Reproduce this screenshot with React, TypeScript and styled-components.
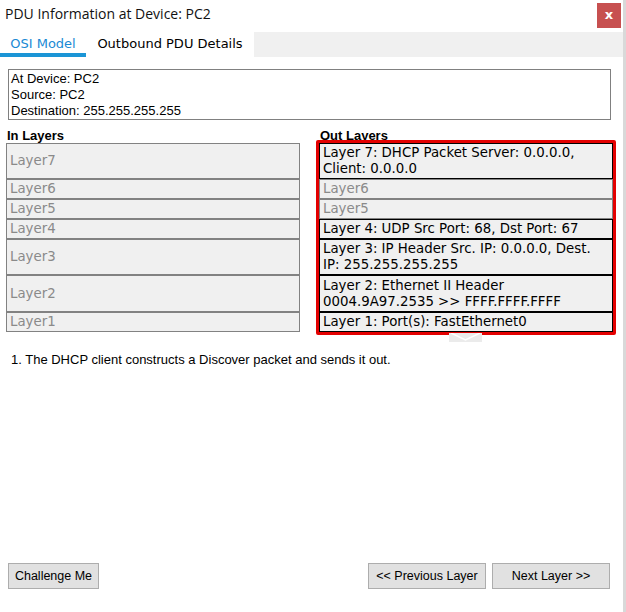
import React from 'react';
import styled, { createGlobalStyle } from 'styled-components';

const GlobalStyle = createGlobalStyle`
  html, body {
    margin: 0;
    padding: 0;
    background: #ffffff;
  }
`;

const Window = styled.div`
  position: relative;
  width: 623px;
  height: 612px;
  display: flex;
  flex-direction: column;
  border-right: 3px solid #d9d9d9;
  font-family: 'Liberation Sans', Arial, sans-serif;
  color: #000;
`;

const TitleBar = styled.div`
  height: 32px;
  display: flex;
  align-items: flex-start;
  justify-content: space-between;
`;

const Title = styled.div`
  font-family: 'Open Sans', 'Noto Sans', sans-serif;
  font-size: 14px;
  line-height: 28px;
  padding-left: 5px;
  color: #111;
`;

const CloseButton = styled.div`
  width: 24px;
  height: 25px;
  margin: 3px 2px 0 0;
  background: #c75050;
  color: #fff;
  font-family: 'DejaVu Sans', sans-serif;
  font-weight: bold;
  font-size: 13px;
  line-height: 24px;
  text-align: center;
`;

const TabBar = styled.div`
  height: 25px;
  display: flex;
  background: #f0f0f0;
`;

const Tab = styled.div<{ $active?: boolean; $width: number }>`
  width: ${(p) => p.$width}px;
  height: 25px;
  box-sizing: border-box;
  background: #fff;
  font-family: 'DejaVu Sans', Verdana, sans-serif;
  font-size: 13px;
  line-height: 24px;
  text-align: center;
  color: ${(p) => (p.$active ? '#1a8ad4' : '#000')};
  border-bottom: 4px solid ${(p) => (p.$active ? '#1b95d6' : 'transparent')};
`;

const InfoBox = styled.div`
  margin: 12px 12px 0 8px;
  border: 1px solid #808080;
  padding: 1px 2px 0;
  font-size: 13px;
  line-height: 16px;
  height: 48px;
`;

const Columns = styled.div`
  position: relative;
  display: grid;
  grid-template-columns: 300px 300px;
  column-gap: 13px;
  padding-left: 3px;
  margin-top: 6px;
`;

const Column = styled.div`
  display: flex;
  flex-direction: column;
`;

const ColumnHeader = styled.div`
  height: 14px;
  padding-left: 4px;
  font-weight: bold;
  font-size: 13px;
  line-height: 19px;
`;

const LayerStack = styled.div<{ $highlight?: boolean }>`
  border: 3px solid ${(p) => (p.$highlight ? '#e30000' : 'transparent')};
  border-radius: 2px;
  display: flex;
  flex-direction: column;
`;

const LayerBox = styled.div<{ $active?: boolean; $height: number }>`
  box-sizing: border-box;
  height: ${(p) => p.$height}px;
  border: 1px solid ${(p) => (p.$active ? '#000' : '#828282')};
  background: #f0f0f0;
  padding: 1px 3px;
  font-family: 'DejaVu Sans', Verdana, sans-serif;
  font-size: 13.33px;
  line-height: 16px;
  color: ${(p) => (p.$active ? '#000' : '#8a8a8a')};
  display: flex;
  align-items: center;
  white-space: nowrap;
`;

const Chevron = styled.svg`
  position: absolute;
  left: 449px;
  top: 207px;
`;

const Description = styled.div`
  margin: 17px 0 0 11px;
  font-size: 13px;
  line-height: 16px;
`;

const Footer = styled.div`
  margin-top: auto;
  display: flex;
  align-items: center;
  padding: 0 13px 23px 8px;
  gap: 6px;
`;

const Spacer = styled.div`
  flex: 1;
`;

const Button = styled.button<{ $width: number }>`
  width: ${(p) => p.$width}px;
  height: 26px;
  padding: 0;
  background: #e1e1e1;
  border: 1px solid #adadad;
  font-family: 'Liberation Sans', Arial, sans-serif;
  font-size: 12.5px;
  color: #000;
`;

type Layer = { height: number; inText: string; outText: React.ReactNode; active: boolean };

const layers: Layer[] = [
  {
    height: 36,
    inText: 'Layer7',
    outText: (
      <>
        Layer 7: DHCP Packet Server: 0.0.0.0,
        <br />
        Client: 0.0.0.0
      </>
    ),
    active: true,
  },
  { height: 20, inText: 'Layer6', outText: 'Layer6', active: false },
  { height: 20, inText: 'Layer5', outText: 'Layer5', active: false },
  { height: 20, inText: 'Layer4', outText: 'Layer 4: UDP Src Port: 68, Dst Port: 67', active: true },
  {
    height: 36,
    inText: 'Layer3',
    outText: (
      <>
        Layer 3: IP Header Src. IP: 0.0.0.0, Dest.
        <br />
        IP: 255.255.255.255
      </>
    ),
    active: true,
  },
  {
    height: 37,
    inText: 'Layer2',
    outText: (
      <>
        Layer 2: Ethernet II Header
        <br />
        0004.9A97.2535 &gt;&gt; FFFF.FFFF.FFFF
      </>
    ),
    active: true,
  },
  { height: 20, inText: 'Layer1', outText: 'Layer 1: Port(s): FastEthernet0', active: true },
];

export default function App() {
  return (
    <>
      <GlobalStyle />
      <Window>
        <TitleBar>
          <Title>PDU Information at Device: PC2</Title>
          <CloseButton>x</CloseButton>
        </TitleBar>
        <TabBar>
          <Tab $active $width={86}>OSI Model</Tab>
          <Tab $width={168}>Outbound PDU Details</Tab>
        </TabBar>
        <InfoBox>
          At Device: PC2
          <br />
          Source: PC2
          <br />
          Destination: 255.255.255.255
        </InfoBox>
        <Columns>
          <Column>
            <ColumnHeader>In Layers</ColumnHeader>
            <LayerStack>
              {layers.map((l) => (
                <LayerBox key={l.inText} $height={l.height}>
                  {l.inText}
                </LayerBox>
              ))}
            </LayerStack>
          </Column>
          <Column>
            <ColumnHeader>Out Layers</ColumnHeader>
            <LayerStack $highlight>
              {layers.map((l) => (
                <LayerBox key={l.inText} $height={l.height} $active={l.active}>
                  <span>{l.outText}</span>
                </LayerBox>
              ))}
            </LayerStack>
          </Column>
          <Chevron width="33" height="9" viewBox="0 0 33 9">
            <rect x="0" y="0" width="33" height="9" fill="#ebebeb" />
            <polyline points="2,0 16.5,7 31,0" fill="none" stroke="#ffffff" strokeWidth="1.5" />
          </Chevron>
        </Columns>
        <Description>1. The DHCP client constructs a Discover packet and sends it out.</Description>
        <Footer>
          <Button $width={91}>Challenge Me</Button>
          <Spacer />
          <Button $width={118}>&lt;&lt; Previous Layer</Button>
          <Button $width={118}>Next Layer &gt;&gt;</Button>
        </Footer>
      </Window>
    </>
  );
}
